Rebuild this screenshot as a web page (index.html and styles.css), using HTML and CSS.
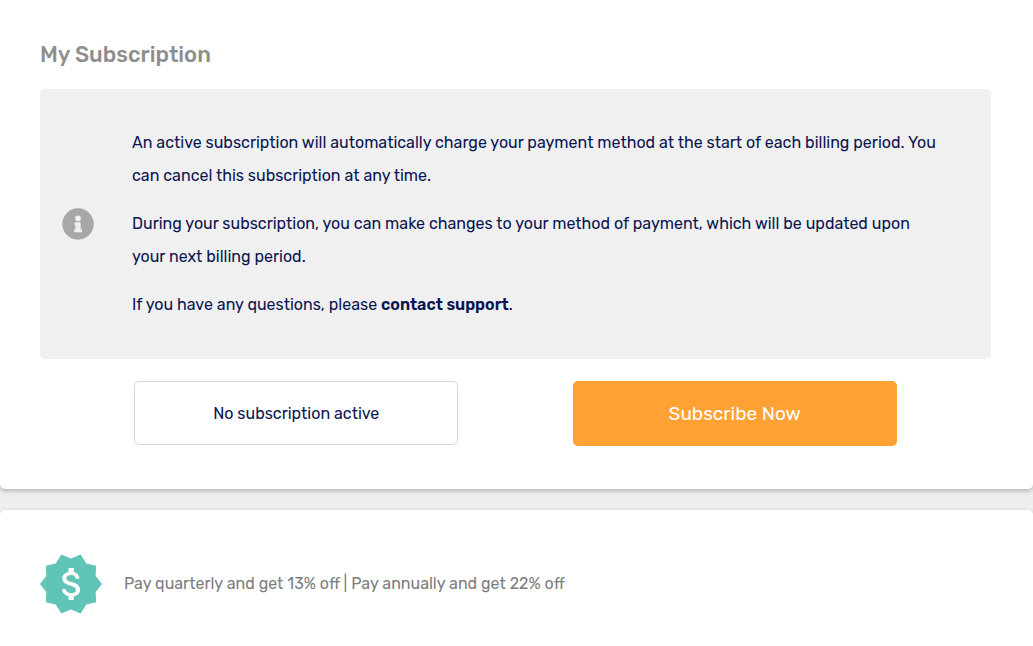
FILE: index.html
```html
<!DOCTYPE html>
<html lang="en">
  <head>
    <meta charset="utf-8" />
    <meta name="viewport" content="width=device-width, initial-scale=1" />
    <title>My Subscription</title>
    <link rel="stylesheet" href="styles.css">
  </head>

  <body>
    <section class="card subscription">
      <h1>My Subscription</h1>

      <div class="info">
        <svg class="info-icon" viewBox="0 0 32 32" aria-hidden="true">
          <circle cx="16" cy="16" r="15.7" fill="#a7a7a7" />
          <circle cx="16" cy="10.4" r="2.9" fill="#f0f0f0" />
          <path d="M12.9 14.7h5.3v6.9h1.3v2.3h-7v-2.3h1.3v-4.6h-.9v-2.3z" fill="#f0f0f0" stroke="#f0f0f0" stroke-width=".8" stroke-linejoin="round" />
        </svg>
        <div class="info-text">
          <p>An active subscription will automatically charge your payment method at the start of each billing period. You can cancel this subscription at any time.</p>
          <p>During your subscription, you can make changes to your method of payment, which will be updated upon your next billing period.</p>
          <p>If you have any questions, please <a href="#">contact support</a>.</p>
        </div>
      </div>

      <div class="actions">
        <div class="status">No subscription active</div>
        <button type="button" class="subscribe">Subscribe Now</button>
      </div>
    </section>

    <section class="card offer">
      <svg class="badge" viewBox="0 0 62 60" aria-hidden="true">
        <path d="M62 30L55.7 38L56.1 48.2L46.3 50.5L40.6 59.5L31 55.5L21.4 59.5L15.7 50.5L5.9 48.2L6.3 38L0 30L6.3 22L5.9 11.8L15.7 9.5L21.4.5L31 4.5L40.6.5L46.3 9.5L56.1 11.8L55.7 22z" fill="#60c4b6" />
        <path transform="translate(10.8 8.8) scale(1.77)" d="M11.8 10.9c-2.27-.59-3-1.2-3-2.15 0-1.09 1.01-1.85 2.7-1.85 1.78 0 2.44.85 2.5 2.1h2.21c-.07-1.72-1.12-3.3-3.21-3.81V3h-3v2.16c-1.94.42-3.5 1.68-3.5 3.61 0 2.31 1.91 3.46 4.7 4.13 2.5.6 3 1.48 3 2.41 0 .69-.49 1.79-2.7 1.79-2.06 0-2.87-.92-2.98-2.1h-2.2c.12 2.19 1.76 3.42 3.68 3.83V21h3v-2.15c1.95-.37 3.5-1.5 3.5-3.55 0-2.84-2.43-3.81-4.7-4.4z" fill="#fff" />
      </svg>
      <p>Pay quarterly and get 13% off | Pay annually and get 22% off</p>
    </section>
  </body>
</html>
```

FILE: styles.css
```css
* {
  box-sizing: border-box;
}

body {
  display: flex;
  flex-direction: column;
  gap: 21px;
  min-height: 100vh;
  margin: 0;
  background-color: #efefef;
  color: #0a1551;
  font-family: Rubik, Roboto, sans-serif;
  font-size: 16px;
}

h1,
p {
  margin: 0;
}

.card {
  background-color: #fff;
  border-radius: 5px;
  box-shadow: 0 2px 5px rgba(0, 0, 0, 0.26);
}

.subscription {
  padding: 40px 42px 43px 40px;
  border-top-left-radius: 0;
  border-top-right-radius: 0;
}

h1 {
  margin-bottom: 19px;
  color: #8e8e8e;
  font-size: 22px;
  font-weight: 500;
  line-height: 30px;
}

.info {
  display: flex;
  align-items: center;
  gap: 38px;
  padding: 37px 50px 38px 22px;
  background-color: #f0f0f0;
  border-radius: 5px;
}

.info-icon {
  flex: none;
  width: 32px;
}

.info-text {
  display: grid;
  gap: 15px;
  line-height: 33px;
}

.info-text a {
  color: inherit;
  font-weight: 600;
  text-decoration: none;
}

.actions {
  display: grid;
  grid-template-columns: 1fr 1fr;
  justify-items: center;
  padding: 22px 37px 0;
}

.status,
.subscribe {
  width: 74%;
  border-radius: 5px;
}

.status {
  display: flex;
  align-items: center;
  justify-content: center;
  height: 64px;
  border: 1px solid #d6d6d6;
}

.subscribe {
  height: 65px;
  border: none;
  background-color: #ffa133;
  color: #fff;
  font-family: inherit;
  font-size: 19px;
  cursor: pointer;
}

.offer {
  display: flex;
  flex: 1;
  align-items: flex-start;
  gap: 22px;
  padding: 44px 40px 32px;
  border-bottom-left-radius: 0;
  border-bottom-right-radius: 0;
  color: #7d7d7d;
}

.offer p {
  line-height: 60px;
}

.badge {
  flex: none;
  width: 62px;
}
```
